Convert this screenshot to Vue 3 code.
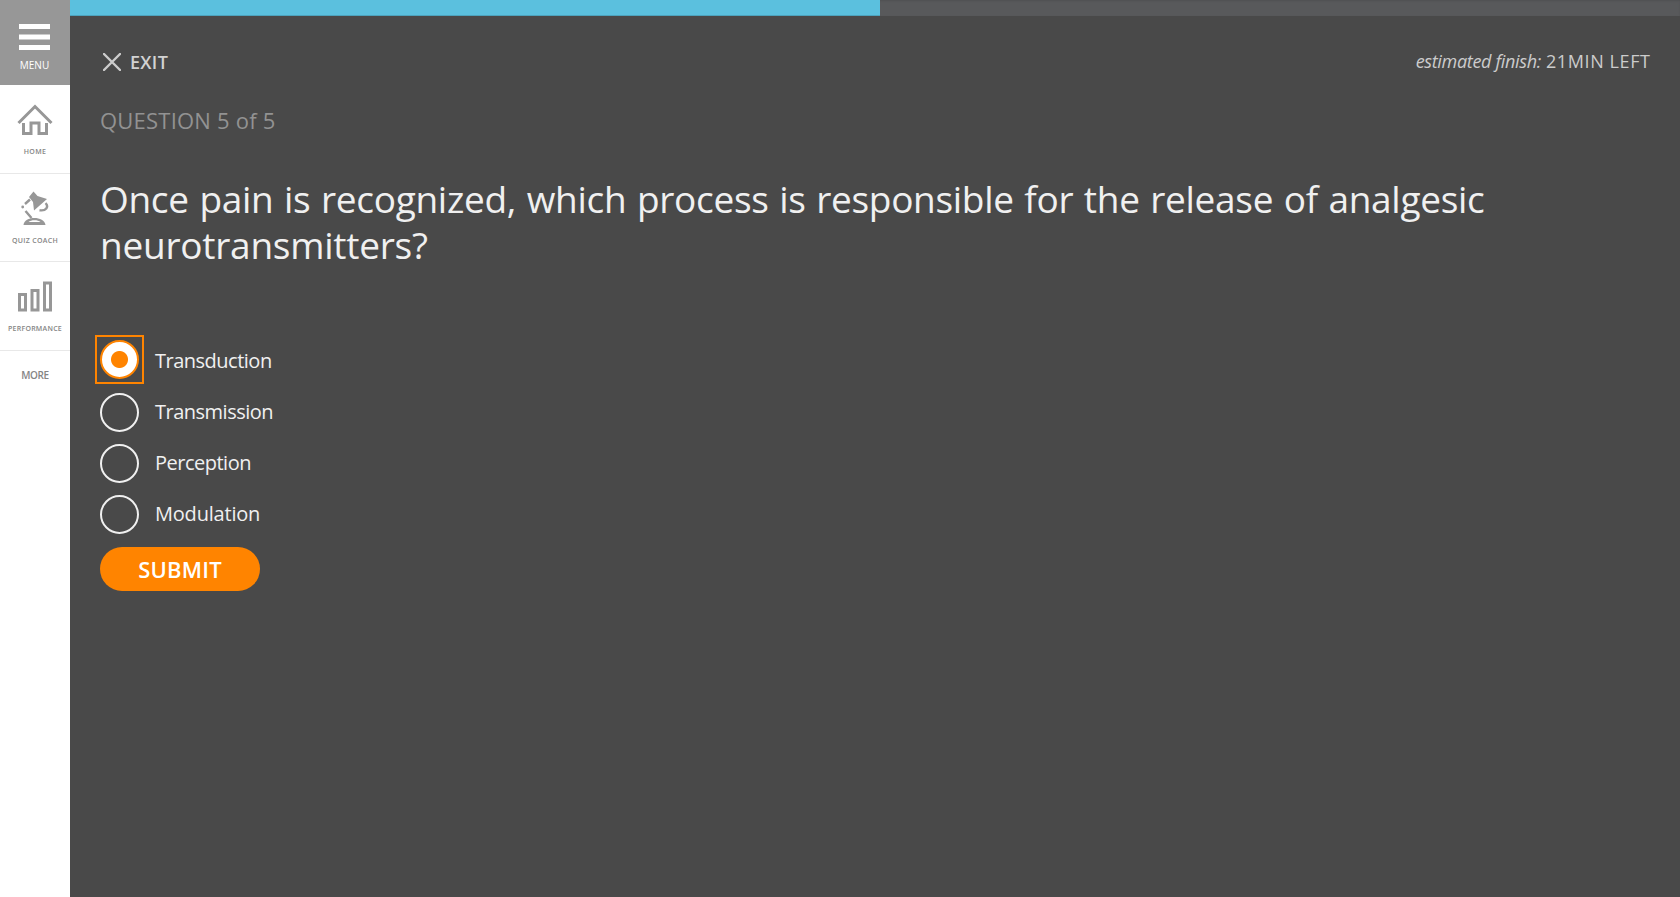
<script setup>
import { ref } from 'vue'

const answers = ['Transduction', 'Transmission', 'Perception', 'Modulation']
const selected = ref('Transduction')
const progress = 50.31
</script>

<template>
  <div class="app">
    <nav class="sidebar">
      <a class="menu">
        <svg width="31" height="27" viewBox="0 0 31 27"><path d="M0 2.5h31M0 13h31M0 23.500h31" stroke="#fff" stroke-width="5" /></svg>
        <span>MENU</span>
      </a>
      <a class="item home">
        <svg width="36" height="32" viewBox="0 0 36 32" fill="none" stroke="#979797" stroke-width="3">
          <path d="M1.500 19 18 2.500 34.500 19" />
          <path d="M6.500 19v10.500h7.500V19h8v10.500h7.500V19" />
        </svg>
        <span class="home-text">HOME</span>
      </a>
      <a class="item coach">
        <svg width="28" height="35" viewBox="0 0 28 35">
          <path d="M12.5.5 16.5 5l9.500 3L13 19.5 12 11 8 6z" fill="#979797" />
          <path d="M9 8.5 4 13M4.500 20l6 7" fill="none" stroke="#979797" stroke-width="2.4" />
          <circle cx="1.7" cy="16" r="1.4" fill="#979797" />
          <path d="M24.500 12.2c3.600 3.400.5 8.200-6 7" fill="none" stroke="#979797" stroke-width="2.4" />
          <path d="M2.500 34C3 24.500 23.500 24.500 24.500 34z" fill="#979797" />
          <path d="M7.500 31c2.400-2.300 9.500-2.300 12 0z" fill="#fff" />
        </svg>
        <span class="coach-text">QUIZ COACH</span>
      </a>
      <a class="item performance">
        <svg width="35" height="31" viewBox="0 0 35 31" fill="none" stroke="#979797" stroke-width="3">
          <path d="M1.5 13.5h6v15.500h-6zM14 9.500h6v19.500h-6zM26.500 2h6v27h-6z" />
        </svg>
        <span class="performance-text">PERFORMANCE</span>
      </a>
      <a class="more">MORE</a>
    </nav>

    <main>
      <div class="progress"><div class="bar" :style="{ width: progress + '%' }"></div></div>
      <header>
        <a class="exit">
          <svg width="18" height="18" viewBox="0 0 18 18"><path d="M1 1 17 17M17 1 1 17" stroke="#ccc" stroke-width="2.4" stroke-linecap="round" /></svg>
          <span>EXIT</span>
        </a>
        <p class="finish"><em>estimated finish:</em><span>21MIN LEFT</span></p>
      </header>
      <p class="counter">QUESTION 5 of 5</p>
      <h1><span class="first-line">Once pain is recognized, which process is responsible for the release of analgesic</span> <span class="second-line">neurotransmitters?</span></h1>
      <div class="answers">
        <label v-for="answer in answers" :key="answer" :class="{ selected: selected === answer }" @click="selected = answer">
          <i class="focus"><i class="radio"></i></i>
          <span>{{ answer }}</span>
        </label>
      </div>
      <button>SUBMIT</button>
    </main>
  </div>
</template>

<style>
body { background: #494949; overflow: hidden; }
</style>

<style scoped>
* { box-sizing: border-box; }
p, h1 { margin: 0; font-weight: 400; }
svg { display: block; flex: none; }
.app { display: flex; height: 897px; background: #494949; color: #f0f0f0; font-family: "Open Sans", sans-serif; white-space: nowrap; }
.sidebar { width: 70px; flex: none; background: #fff; color: #858585; text-align: center; }
.menu, .item { display: flex; flex-direction: column; align-items: center; }
.menu { height: 85px; padding: 24px 1px 0 0; background: #979797; color: #fff; }
.menu span { margin-top: 7px; font-size: 10px; line-height: 14px; }
.item { border-bottom: 1px solid #e8e8e8; font-size: 7px; line-height: 10px; font-weight: 600; }
.home { height: 89px; padding-top: 19px; }
.home-text { margin-top: 11px; letter-spacing: .4px; }
.coach { height: 88px; padding-top: 17px; }
.coach-text { margin-top: 10px; letter-spacing: .3px; }
.performance { height: 89px; padding-top: 19px; }
.performance-text { margin-top: 12px; letter-spacing: .25px; }
.more { display: block; margin-top: 17px; font-size: 10px; line-height: 14px; letter-spacing: -.4px; font-weight: 600; }
main { flex: 1; min-width: 0; }
.progress { height: 16px; background: #58595b; box-shadow: inset 0 1px 2px rgba(0,0,0,.1); }
.bar { height: 16px; background: #5bc0de; box-shadow: inset 0 -1px 0 rgba(0,0,0,.15); }
header { height: 82px; padding: 32px 30px 0 33px; display: flex; justify-content: space-between; align-items: flex-start; }
.exit { display: flex; gap: 9px; color: #d2d2d2; padding-top: 5px; }
.exit span { font-size: 18px; line-height: 20px; margin-top: -1px; font-weight: 600; letter-spacing: .3px; }
.finish { display: flex; gap: 5px; color: #ccc; font-size: 18px; line-height: 26px; }
.finish em { letter-spacing: -.32px; }
.finish span { letter-spacing: .6px; margin-right: -.6px; }
.counter { padding-left: 30px; height: 78px; color: #929292; font-size: 22px; line-height: 44px; letter-spacing: .22px; }
h1 { display: flex; flex-direction: column; padding-left: 30px; font-size: 37px; line-height: 46px; }
.first-line { letter-spacing: -.3px; word-spacing: 1.3px; }
.second-line { letter-spacing: -.25px; }
.answers { padding: 67px 0 0 25px; }
label { display: flex; align-items: center; height: 51px; font-size: 20px; line-height: 28px; letter-spacing: -.5px; }
.focus { display: flex; align-items: center; justify-content: center; width: 49px; height: 49px; margin-top: 2px; border: 2px solid transparent; }
.radio { width: 39px; height: 39px; flex: none; border: 2px solid #f0f0f0; border-radius: 50%; }
label > span { margin-left: 11px; }
label:last-child > span { letter-spacing: -.2px; }
.selected .focus { border-color: #ff8400; margin-top: -2px; }
.selected .radio { border-color: #ff8400; background: radial-gradient(circle, #ff8400 8px, #fff 9px); }
button { display: block; width: 160px; height: 44px; margin: 8px 0 0 30px; padding: 0; border: 0; border-radius: 22px; background: #ff8400; color: #fff; font: 600 22px/42px "Open Sans", sans-serif; letter-spacing: .2px; }
</style>
